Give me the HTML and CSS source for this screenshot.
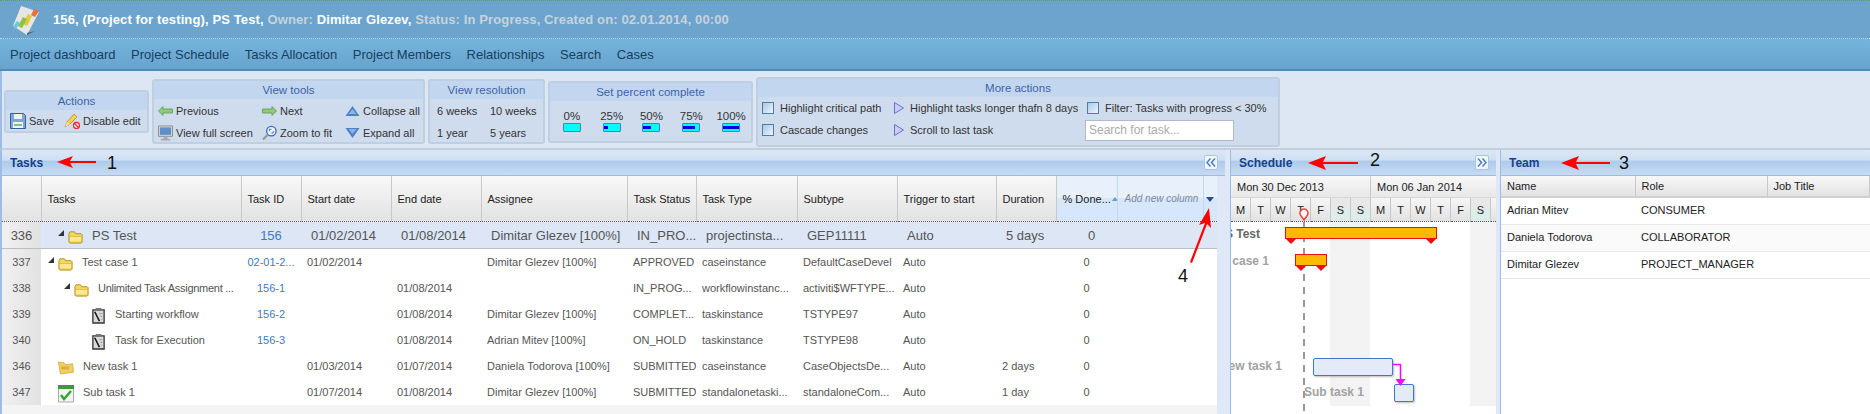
FILE: index.html
```html
<!DOCTYPE html>
<html lang="en">
<head>
    <meta charset="UTF-8">
    <title>Project Schedule</title>
    <link rel="stylesheet" href="styles.css">
</head>
<body>
    <svg class="icon-defs" width="0" height="0">
        <symbol id="i-folder" viewBox="0 0 16 16">
            <path d="M1 5l1-2h5l1 2h6l1 1v8l-1 1H2l-1-1z" fill="#f6d65f" stroke="#b08d22"/>
            <path d="M1.5 8h13v6h-13z" fill="#ffe98f" stroke="#c9a52f" stroke-width=".6"/>
        </symbol>
        <symbol id="i-doc" viewBox="0 0 16 18">
            <path d="M2 3h12v14H2z" fill="#d9d9d9" stroke="#333" stroke-width="1.4"/>
            <path d="M5 1h6v3H5z" fill="#777"/>
            <path d="M4 5l5 10" stroke="#111" stroke-width="1.6"/>
            <path d="M9 7h3M10 10h2M11 13h1" stroke="#999"/>
        </symbol>
        <symbol id="i-case" viewBox="0 0 16 16">
            <path d="M0 2l6 1 2 2 7-1 1 9-14 2z" fill="#f2cf5c" stroke="#bfa03a" stroke-width=".7"/>
            <path d="M3 7h8v3H3z" fill="#c9a02e" opacity=".7"/>
        </symbol>
        <symbol id="i-check" viewBox="0 0 16 18">
            <path d="M.5 1h15v16H.5z" fill="#f4f4f0" stroke="#aaa"/>
            <path d="M0 0h16v4H0z" fill="#3c9a3c"/>
            <path d="M3 10l3 4 7-8" fill="none" stroke="#2fa52f" stroke-width="2.4"/>
        </symbol>
        <symbol id="i-save" viewBox="0 0 16 16">
            <path d="M.5.5h13l2 2v13H.5z" fill="#7ea6d8" stroke="#36609c"/>
            <path d="M4 1h8v5H4z" fill="#eef3fa"/>
            <path d="M3 9h10v6H3z" fill="#eef3fa"/>
            <path d="M4 11h8v2H4z" fill="#7bc47f"/>
        </symbol>
        <symbol id="i-edit" viewBox="0 0 16 16">
            <path d="M1 14l2-5 7-8 3 3-7 7z" fill="#f5d24e" stroke="#b58a2a" stroke-width=".8"/>
            <path d="M1 14l2-5 3 2z" fill="#f3dfb4"/>
            <circle cx="12.5" cy="12.5" r="3" fill="#fff" stroke="#d33333" stroke-width="1.3"/>
            <path d="M10.5 10.5l4 4" stroke="#d33333" stroke-width="1.3"/>
        </symbol>
        <symbol id="i-prev" viewBox="0 0 15 10">
            <path d="M5 .5L.5 5 5 9.5V7h9.5V3H5z" fill="#8fc97c" stroke="#5d9a50" stroke-width=".8"/>
        </symbol>
        <symbol id="i-next" viewBox="0 0 15 10">
            <path d="M10 .5L14.5 5 10 9.5V7H.5V3H10z" fill="#8fc97c" stroke="#5d9a50" stroke-width=".8"/>
        </symbol>
        <symbol id="i-up" viewBox="0 0 14 10"><path d="M7 0l7 10H0z" fill="#4d7fcb"/><path d="M7 3l4 5H3z" fill="#8fb2e4"/></symbol>
        <symbol id="i-down" viewBox="0 0 14 10"><path d="M0 0h14L7 10z" fill="#4d7fcb"/><path d="M3 1h8L7 6z" fill="#8fb2e4"/></symbol>
        <symbol id="i-screen" viewBox="0 0 16 16">
            <path d="M.5.5h15v11H.5z" fill="#ddd" stroke="#888"/>
            <path d="M2 2h12v8H2z" fill="#5f8fc7"/>
            <path d="M6 12h4v2H6zM3 14h10v2H3z" fill="#aaa"/>
        </symbol>
        <symbol id="i-zoom" viewBox="0 0 16 16">
            <circle cx="10" cy="6" r="5" fill="#eaf1fb" stroke="#3d64c0" stroke-width="1.4"/>
            <path d="M8 6V4h2M12 6v2h-2" fill="none" stroke="#3d64c0"/>
            <path d="M6 10l-5 5" stroke="#999" stroke-width="2.4"/>
        </symbol>
        <symbol id="i-play" viewBox="0 0 10 12"><path d="M.5.5l9 5.500-9 5.500z" fill="#c8cdf2" stroke="#6a6fd0"/></symbol>
        <symbol id="i-left" viewBox="0 0 10 9"><path d="M4.500.5L1 4.500l3.500 4M9 .5L5.500 4.500l3.500 4" fill="none" stroke="#4d7fc0" stroke-width="1.500"/></symbol>
        <symbol id="i-right" viewBox="0 0 10 9"><path d="M1 .5l3.500 4L1 8.500M5.500 .5L9 4.500l-3.500 4" fill="none" stroke="#4d7fc0" stroke-width="1.500"/></symbol>
    </svg>

    <header class="title-bar">
        <svg class="logo" width="26" height="30" viewBox="0 0 26 30">
            <path d="M8 1L26 7 14 30 0 21z" fill="#e6e6e2"/>
            <path d="M21 4l5 2-4 6-4-2z" fill="#e8703a"/>
            <path d="M15 9l4 2-5 10-4-2z" fill="#e3c83f"/>
            <path d="M10 12l4 2-5 9-4-2z" fill="#8ac540"/>
            <path d="M4 16l3 2-4 6-3-2z" fill="#6cc4e8"/>
            <path d="M14 30l8-4-8 2z" fill="#40627c"/>
        </svg>
        <h1><b>156, (Project for testing), PS Test,</b> Owner: <b>Dimitar Glezev,</b> Status: In Progress, Created on: 02.01.2014, 00:00</h1>
    </header>

    <nav class="main-nav">
        <a>Project dashboard</a>
        <a>Project Schedule</a>
        <a>Tasks Allocation</a>
        <a>Project Members</a>
        <a>Relationships</a>
        <a>Search</a>
        <a>Cases</a>
    </nav>

    <div class="toolbar">
        <section class="tool-group actions">
            <h3>Actions</h3>
            <div class="tools">
                <span class="tool"><svg width="16" height="16"><use href="#i-save"/></svg>Save</span>
                <span class="tool"><svg width="16" height="16"><use href="#i-edit"/></svg>Disable edit</span>
            </div>
        </section>
        <section class="tool-group view-tools">
            <h3>View tools</h3>
            <div class="tools grid-3">
                <span class="tool"><svg width="15" height="10"><use href="#i-prev"/></svg>Previous</span>
                <span class="tool"><svg width="15" height="10"><use href="#i-next"/></svg>Next</span>
                <span class="tool"><svg width="15" height="10"><use href="#i-up"/></svg>Collapse all</span>
                <span class="tool"><svg width="15" height="16"><use href="#i-screen"/></svg>View full screen</span>
                <span class="tool"><svg width="15" height="16"><use href="#i-zoom"/></svg>Zoom to fit</span>
                <span class="tool"><svg width="15" height="10"><use href="#i-down"/></svg>Expand all</span>
            </div>
        </section>
        <section class="tool-group resolution">
            <h3>View resolution</h3>
            <div class="tools grid-2">
                <span class="tool">6 weeks</span>
                <span class="tool">10 weeks</span>
                <span class="tool">1 year</span>
                <span class="tool">5 years</span>
            </div>
        </section>
        <section class="tool-group percent">
            <h3>Set percent complete</h3>
            <div class="tools percent-list">
                <span class="pct">0%<i class="pct-bar"></i></span>
                <span class="pct">25%<i class="pct-bar"><em class="w25"></em></i></span>
                <span class="pct">50%<i class="pct-bar"><em class="w50"></em></i></span>
                <span class="pct">75%<i class="pct-bar"><em class="w75"></em></i></span>
                <span class="pct">100%<i class="pct-bar"><em class="w100"></em></i></span>
            </div>
        </section>
        <section class="tool-group more">
            <h3>More actions</h3>
            <div class="tools more-grid">
                <span class="tool"><i class="check"></i>Highlight critical path</span>
                <span class="tool"><svg width="10" height="12"><use href="#i-play"/></svg>Highlight tasks longer thafn 8 days</span>
                <span class="tool"><i class="check"></i>Filter: Tasks with progress &lt; 30%</span>
                <span class="tool"><i class="check"></i>Cascade changes</span>
                <span class="tool"><svg width="10" height="12"><use href="#i-play"/></svg>Scroll to last task</span>
                <input class="search" type="text" placeholder="Search for task...">
            </div>
        </section>
    </div>

    <main class="panels">
        <section class="panel tasks">
            <div class="panel-head"><h2>Tasks</h2><button class="collapse"><svg width="10" height="9"><use href="#i-left"/></svg></button></div>
            <div class="grid-wrap">
            <table class="grid">
                <colgroup>
                    <col class="c-num"><col class="c-task"><col class="c-id"><col class="c-date"><col class="c-date">
                    <col class="c-who"><col class="c-status"><col class="c-type"><col class="c-sub"><col class="c-trig">
                    <col class="c-dur"><col class="c-done"><col class="c-add"><col class="c-menu">
                </colgroup>
                <thead>
                    <tr>
                        <th></th><th>Tasks</th><th>Task ID</th><th>Start date</th><th>End date</th><th>Assignee</th>
                        <th>Task Status</th><th>Task Type</th><th>Subtype</th><th>Trigger to start</th><th>Duration</th>
                        <th class="sorted">% Done...<i class="sort-up"></i></th>
                        <th class="sorted add"><em>Add new column</em></th>
                        <th class="sorted menu"><i class="sort-down"></i></th>
                    </tr>
                </thead>
                <tbody>
                    <tr class="selected">
                        <td class="num">336</td>
                        <td><span class="tree lvl-0"><i class="twist"></i><svg width="15" height="15"><use href="#i-folder"/></svg>PS Test</span></td>
                        <td class="tid">156</td><td>01/02/2014</td><td>01/08/2014</td><td>Dimitar Glezev [100%]</td>
                        <td>IN_PRO...</td><td>projectinsta...</td><td>GEP11111</td><td>Auto</td><td>5 days</td><td class="ctr">0</td><td colspan="2"></td>
                    </tr>
                    <tr>
                        <td class="num">337</td>
                        <td><span class="tree lvl-1"><i class="twist"></i><svg width="15" height="15"><use href="#i-folder"/></svg>Test case 1</span></td>
                        <td class="tid">02-01-2...</td><td>01/02/2014</td><td></td><td>Dimitar Glezev [100%]</td>
                        <td>APPROVED</td><td>caseinstance</td><td>DefaultCaseDevel</td><td>Auto</td><td></td><td class="ctr">0</td><td colspan="2"></td>
                    </tr>
                    <tr>
                        <td class="num">338</td>
                        <td><span class="tree lvl-2"><i class="twist"></i><svg width="15" height="15"><use href="#i-folder"/></svg>Unlimited Task Assignment ...</span></td>
                        <td class="tid">156-1</td><td></td><td>01/08/2014</td><td></td>
                        <td>IN_PROG...</td><td>workflowinstanc...</td><td>activiti$WFTYPE...</td><td>Auto</td><td></td><td class="ctr">0</td><td colspan="2"></td>
                    </tr>
                    <tr>
                        <td class="num">339</td>
                        <td><span class="tree lvl-3"><svg width="15" height="17"><use href="#i-doc"/></svg>Starting workflow</span></td>
                        <td class="tid">156-2</td><td></td><td>01/08/2014</td><td>Dimitar Glezev [100%]</td>
                        <td>COMPLET...</td><td>taskinstance</td><td>TSTYPE97</td><td>Auto</td><td></td><td class="ctr">0</td><td colspan="2"></td>
                    </tr>
                    <tr>
                        <td class="num">340</td>
                        <td><span class="tree lvl-3"><svg width="15" height="17"><use href="#i-doc"/></svg>Task for Execution</span></td>
                        <td class="tid">156-3</td><td></td><td>01/08/2014</td><td>Adrian Mitev [100%]</td>
                        <td>ON_HOLD</td><td>taskinstance</td><td>TSTYPE98</td><td>Auto</td><td></td><td class="ctr">0</td><td colspan="2"></td>
                    </tr>
                    <tr>
                        <td class="num">346</td>
                        <td><span class="tree lvl-4"><svg width="16" height="15"><use href="#i-case"/></svg>New task 1</span></td>
                        <td class="tid"></td><td>01/03/2014</td><td>01/07/2014</td><td>Daniela Todorova [100%]</td>
                        <td>SUBMITTED</td><td>caseinstance</td><td>CaseObjectsDe...</td><td>Auto</td><td>2 days</td><td class="ctr">0</td><td colspan="2"></td>
                    </tr>
                    <tr>
                        <td class="num">347</td>
                        <td><span class="tree lvl-4"><svg width="16" height="18"><use href="#i-check"/></svg>Sub task 1</span></td>
                        <td class="tid"></td><td>01/07/2014</td><td>01/08/2014</td><td>Dimitar Glezev [100%]</td>
                        <td>SUBMITTED</td><td>standalonetaski...</td><td>standaloneCom...</td><td>Auto</td><td>1 day</td><td class="ctr">0</td><td colspan="2"></td>
                    </tr>
                </tbody>
            </table>
            </div>
        </section>

        <section class="panel schedule">
            <div class="panel-head"><h2>Schedule</h2><button class="collapse"><svg width="10" height="9"><use href="#i-right"/></svg></button></div>
            <div class="weeks"><span>Mon 30 Dec 2013</span><span>Mon 06 Jan 2014</span></div>
            <div class="days">
                <span>M</span><span>T</span><span>W</span><span>T</span><span>F</span><span class="we">S</span><span class="we">S</span>
                <span>M</span><span>T</span><span>W</span><span>T</span><span>F</span><span class="we">S</span><span class="end"></span>
            </div>
            <div class="gantt">
                <i class="weekend w1"></i>
                <i class="weekend w2"></i>
                <i class="today"></i>
                <svg class="pin" width="10" height="13" viewBox="0 0 10 13"><path d="M5 12L1.500 7a4 4 0 1 1 7 0z" fill="#fff" stroke="#ee4444" stroke-width="1.500"/></svg>
                <span class="label l-ps">PS Test</span>
                <span class="label l-case">Test case 1</span>
                <span class="label l-new">New task 1</span>
                <span class="label l-sub">Sub task 1</span>
                <i class="bar parent b-ps"></i>
                <i class="mark m1"></i><i class="mark m2"></i>
                <i class="bar parent b-case"></i>
                <i class="mark m3"></i><i class="mark m4"></i>
                <i class="bar leaf b-new"></i>
                <i class="bar leaf b-sub"></i>
                <svg class="link" width="14" height="24" viewBox="0 0 14 24"><path d="M0 1.500h7.500V17" fill="none" stroke="#ff00ff" stroke-width="1.500"/><path d="M2.500 16h10l-5 7z" fill="#ff00ff"/></svg>
            </div>
        </section>

        <section class="panel team">
            <div class="panel-head"><h2>Team</h2></div>
            <table class="team-grid">
                <colgroup><col class="t-name"><col class="t-role"><col></colgroup>
                <thead><tr><th>Name</th><th>Role</th><th>Job Title</th></tr></thead>
                <tbody>
                    <tr><td>Adrian Mitev</td><td>CONSUMER</td><td></td></tr>
                    <tr><td>Daniela Todorova</td><td>COLLABORATOR</td><td></td></tr>
                    <tr><td>Dimitar Glezev</td><td>PROJECT_MANAGER</td><td></td></tr>
                </tbody>
            </table>
        </section>
    </main>

    <!-- numbered callouts drawn on top of the screenshot -->
    <svg class="callouts" width="1870" height="414" viewBox="0 0 1870 414">
        <g fill="#f00" stroke="none">
            <path d="M57 162l16-6-3 5h26v2H70l3 5z"/>
            <path d="M1308 163l18-7-3 6h35v2h-35l3 6z"/>
            <path d="M1561 163l18-7-3 6h34v2h-34l3 6z"/>
            <path d="M1209 208l2 20-4-4-15 39-2-1 15-39-6 2z"/>
        </g>
        <g class="callout-num">
            <text x="107" y="169">1</text>
            <text x="1370" y="166">2</text>
            <text x="1619" y="169">3</text>
            <text x="1178" y="282">4</text>
        </g>
    </svg>
</body>
</html>
```

FILE: styles.css
```css
/* General */
html, body {
    margin: 0;
    padding: 0;
    height: 414px;
    overflow: hidden;
}

body {
    position: relative;
    font-family: "Liberation Sans", Arial, sans-serif;
    font-size: 11px;
    color: #333;
    background-color: #dfe8f6;
}

.icon-defs {
    position: absolute;
}

h1, h2, h3 {
    margin: 0;
}

/* Title bar */
.title-bar {
    display: flex;
    align-items: center;
    box-sizing: border-box;
    height: 39px;
    padding-left: 13px;
    gap: 14px;
    background-color: #6ca4cd;
    border-top: 1px dotted #5f9a6a;
    border-bottom: 1px dotted #b9d8ea;
}

.title-bar h1 {
    font-size: 13px;
    font-weight: bold;
    letter-spacing: 0.12px;
    color: #c8d3dc;
}

.title-bar b {
    color: #fff;
}

/* Nav */
.main-nav {
    display: flex;
    align-items: center;
    box-sizing: border-box;
    height: 32px;
    padding-left: 10px;
    gap: 15.500px;
    background: linear-gradient(#74b4dc, #68a3cd);
    border-bottom: 2px solid #4f8bb8;
    font-size: 13px;
    color: #173f5f;
}

/* Toolbar */
.toolbar {
    display: flex;
    align-items: center;
    box-sizing: border-box;
    height: 79px;
    gap: 3px;
    padding: 4px 0 0 4px;
    background-color: #dde7f4;
    border-left: 2px solid #9dbce8;
    border-bottom: 2px solid #c4cfdb;
}

.tool-group {
    flex: none;
    box-sizing: border-box;
    background-color: #cfdcee;
    border: 2px solid #bfcfe2;
    border-radius: 3px;
}

.tool-group h3 {
    height: 18px;
    line-height: 18px;
    font-size: 11.500px;
    font-weight: normal;
    text-align: center;
    color: #3d62a8;
    background-color: #c2d7ef;
}

.tool {
    display: flex;
    align-items: center;
    gap: 3px;
    white-space: nowrap;
}

.actions { width: 145px; height: 43px; margin-left: -2px; }
.view-tools { width: 273px; height: 65px; }
.resolution { width: 117px; height: 65px; }
.percent { width: 205px; height: 62px; }
.more { width: 524px; height: 70px; }

.actions .tools {
    display: flex;
    gap: 10px;
    padding: 1px 0 0 4px;
    height: 20px;
}

.grid-3 {
    display: grid;
    grid-template-columns: 104px 83px auto;
    grid-auto-rows: 22px;
    padding: 1px 0 0 4px;
}

.grid-3 .tool svg { flex: none; }

.grid-2 {
    display: grid;
    grid-template-columns: 53px auto;
    grid-auto-rows: 22px;
    padding: 1px 0 0 7px;
}

.percent-list {
    display: flex;
    gap: 0;
    padding: 9px 0 0 2px;
}

.pct {
    display: flex;
    flex-direction: column;
    align-items: center;
    width: 40px;
    line-height: 13px;
    font-size: 11.500px;
}

.pct-bar {
    display: flex;
    align-items: center;
    box-sizing: border-box;
    width: 18px;
    height: 9px;
    background-color: #00ffff;
    border: 1px solid #3c82d8;
    border-radius: 1px;
}

.pct-bar em {
    display: block;
    height: 3px;
    background-color: #0000e0;
}

.w25 { width: 25%; }
.w50 { width: 50%; }
.w75 { width: 75%; }
.w100 { width: 100%; }

.more-grid {
    display: grid;
    grid-template-columns: 132px 193px auto;
    grid-auto-rows: 22px;
    padding: 0 0 0 4px;
}

.more-grid .tool { gap: 6px; }

.check {
    display: block;
    box-sizing: border-box;
    width: 12px;
    height: 12px;
    background: linear-gradient(135deg, #a8c8e8, #eef5fc);
    border: 1px solid #4f7f9f;
}

.search {
    box-sizing: border-box;
    width: 149px;
    height: 21px;
    margin: 1px 0 0 -2px;
    padding: 0 3px;
    font: 12px "Liberation Sans", Arial, sans-serif;
    border: 1px solid #b5b8c8;
    background-color: #fff;
}

.search::placeholder {
    color: #aaa;
}

/* Panels */
.panels {
    display: flex;
    height: 264px;
}

.panel {
    flex: none;
    box-sizing: border-box;
    height: 264px;
    overflow: hidden;
}

.tasks {
    width: 1225px;
    border-left: 2px solid #9dbce8;
    background-color: #dfe8f6;
}

.schedule {
    width: 266px;
    margin-left: 5px;
    border-left: 1px solid #9dbce8;
    background-color: #fff;
}

.team {
    width: 370px;
    margin-left: 4px;
    border-left: 1px solid #9dbce8;
    background-color: #fff;
}

.panel-head {
    display: flex;
    align-items: center;
    justify-content: space-between;
    box-sizing: border-box;
    height: 26px;
    padding: 0 7px 0 8px;
    background: linear-gradient(#dbe7f6 0, #cfe0f4 40%, #aecbec 45%, #c7daf2 100%);
    border-bottom: 1px solid #99bbe8;
}

.panel-head h2 {
    font-size: 12px;
    font-weight: bold;
    color: #15428b;
}

.collapse {
    display: flex;
    align-items: center;
    justify-content: center;
    box-sizing: border-box;
    width: 14px;
    height: 15px;
    padding: 0;
    background-color: #f0f5fc;
    border: 1px solid #a8c4ea;
    border-radius: 2px;
}

/* Task grid */
.grid-wrap {
    width: 1215px;
    height: 238px;
    background-color: #f4f4f4;
}

.grid {
    width: 1215px;
    table-layout: fixed;
    border-collapse: collapse;
    background-color: #fff;
}

.c-num { width: 39px; }
.c-task { width: 200px; }
.c-id { width: 60px; }
.c-date { width: 90px; }
.c-who { width: 146px; }
.c-status { width: 69px; }
.c-type { width: 101px; }
.c-sub { width: 100px; }
.c-trig { width: 99px; }
.c-dur { width: 60px; }
.c-done { width: 61px; }
.c-add { width: 86px; }
.c-menu { width: 14px; }

.grid th, .team-grid th {
    padding: 0 6px;
    font-weight: normal;
    text-align: left;
    color: #222;
    white-space: nowrap;
    overflow: hidden;
    background: linear-gradient(#f8f8f8, #e2e2e2);
    border-right: 1px solid #c8c8c8;
}

.grid th {
    height: 45px;
    border-bottom: 1px dotted #555;
}

.grid th:last-child { border-right: none; }

.grid th.sorted {
    background: linear-gradient(#e8f0fb 50%, #d6e6fb 50%);
    border-right-color: #c4d6ee;
}

.grid th.add {
    padding: 0 0 0 7px;
    font-size: 10px;
    color: #7a8a9c;
}

.grid th.menu { padding: 0; text-align: center; }

.sort-up, .sort-down {
    display: inline-block;
    border-left: 4px solid transparent;
    border-right: 4px solid transparent;
}

.sort-up {
    margin-left: 1px;
    vertical-align: 2px;
    border-left-width: 3px;
    border-right-width: 3px;
    border-bottom: 4px solid #6d98d4;
}

.sort-down {
    vertical-align: 1px;
    border-top: 5px solid #2a4d8c;
}

.grid td {
    height: 26px;
    padding: 0 6px;
    color: #555;
    white-space: nowrap;
    overflow: hidden;
}

.grid td.num {
    padding: 0;
    text-align: center;
    background: linear-gradient(90deg, #f0f0f0, #e2e2e2);
}

.grid td.tid {
    padding: 0;
    text-align: center;
    color: #3a7cc6;
}

.grid td.ctr {
    padding: 0;
    text-align: center;
}

.selected td {
    height: 26px;
    font-size: 13px;
    background-color: #dce6f5;
    border-bottom: 1px solid #b8bdc6;
}

.selected td:nth-child(n+4) { padding-left: 10px; }

.tree {
    display: flex;
    align-items: center;
    gap: 4px;
}

.tree svg { flex: none; margin-top: 3px; }

.twist {
    display: block;
    flex: none;
    width: 0;
    height: 0;
    margin: -4px 0 0;
    border-left: 6px solid transparent;
    border-bottom: 6px solid #333;
}

.lvl-0 { padding-left: 11px; gap: 4px; }
.lvl-0 svg { margin-right: 5px; }
.lvl-1 { padding-left: 1px; }
.lvl-1 svg { margin-right: 5px; }
.lvl-2 { padding-left: 17px; letter-spacing: -0.27px; }
.lvl-2 svg { margin-right: 5px; }
.lvl-3 { padding-left: 44px; gap: 9px; }
.lvl-4 { padding-left: 11px; gap: 9px; }

/* Schedule */
.weeks, .days {
    display: flex;
}

.weeks span {
    box-sizing: border-box;
    width: 140px;
    height: 22px;
    line-height: 22px;
    padding-left: 6px;
    flex: none;
    background: linear-gradient(#f8f8f8, #e8e8e8);
    border-right: 1px solid #c8c8c8;
    border-bottom: 1px solid #d8d8d8;
    white-space: nowrap;
    color: #222;
    font-size: 11px;
}

.weeks span:last-child { border-right: none; width: 125px; }

.days span {
    box-sizing: border-box;
    width: 20px;
    height: 24px;
    line-height: 24px;
    flex: none;
    text-align: center;
    color: #222;
    background: linear-gradient(#f6f6f6, #e2e2e2);
    border-right: 1px solid #c8c8c8;
    border-bottom: 1px dotted #555;
}

.days .we {
    background: linear-gradient(#e8e8e8 50%, #dcedea 50%);
}

.days .end { width: 5px; border-right: none; }

.gantt {
    position: relative;
    height: 192px;
}

.weekend {
    position: absolute;
    top: 0;
    height: 184px;
    background-color: #f3f3f3;
}

.w1 { left: 99px; width: 40px; }
.w2 { left: 239px; width: 26px; }

.today {
    position: absolute;
    left: 72px;
    top: 0;
    width: 2px;
    height: 192px;
    background: repeating-linear-gradient(#999 0 7px, transparent 7px 13px);
}

.pin {
    position: absolute;
    left: 68px;
    top: -14px;
}

.label {
    position: absolute;
    font-size: 12px;
    font-weight: bold;
    color: #a2a2a2;
    white-space: nowrap;
}

.l-ps { right: 236px; top: 5px; color: #666; }
.l-case { right: 227px; top: 32px; }
.l-new { right: 214px; top: 137px; }
.l-sub { left: 73px; top: 163px; }

.bar {
    position: absolute;
    box-sizing: border-box;
}

.parent {
    height: 12px;
    background-color: #ffb900;
    border: 1px solid #e81010;
}

.leaf {
    background-color: #e4ebf6;
    border: 1px solid #3a78d6;
    border-radius: 2px;
    box-shadow: 1px 1px 2px rgba(0, 0, 0, 0.25);
}

.b-ps { left: 54px; top: 5px; width: 152px; }
.b-case { left: 64px; top: 32px; width: 32px; }
.b-new { left: 82px; top: 136px; width: 80px; height: 18px; }
.b-sub { left: 163px; top: 162px; width: 20px; height: 18px; }

.mark {
    position: absolute;
    width: 0;
    height: 0;
    border-left: 5px solid transparent;
    border-right: 5px solid transparent;
    border-top: 5px solid #e81010;
}

.m1 { left: 55px; top: 17px; }
.m2 { left: 195px; top: 17px; }
.m3 { left: 65px; top: 44px; }
.m4 { left: 85px; top: 44px; }

.link {
    position: absolute;
    left: 162px;
    top: 141px;
}

/* Team */
.team-grid {
    width: 100%;
    table-layout: fixed;
    border-collapse: collapse;
}

.t-name { width: 134px; }
.t-role { width: 132px; }

.team-grid th {
    height: 20px;
    border-bottom: 2px solid #d0d0d0;
}

.team-grid td {
    height: 23px;
    padding: 0 6px 3px;
    color: #222;
    border-bottom: 1px solid #e8e8e8;
}

.team-grid tr:nth-child(2) td {
    background-color: #fafafa;
}

/* Callouts */
.callouts {
    position: absolute;
    left: 0;
    top: 0;
    pointer-events: none;
}

.callout-num {
    font-family: "Liberation Sans", Arial, sans-serif;
    font-size: 18px;
    fill: #111;
}
```
